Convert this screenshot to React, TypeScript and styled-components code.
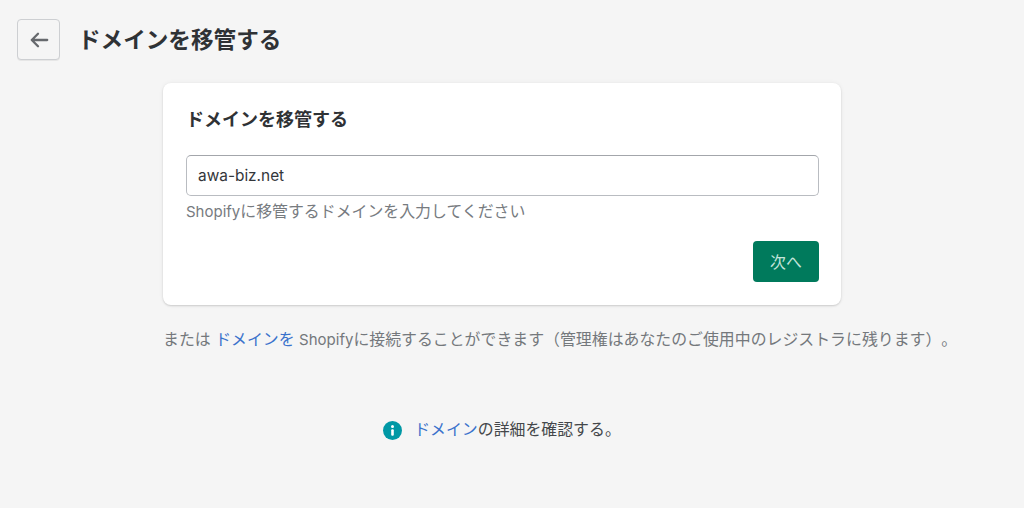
import React from 'react';
import styled, { createGlobalStyle } from 'styled-components';

const GlobalStyle = createGlobalStyle`
  html,
  body {
    margin: 0;
    padding: 0;
    height: 100%;
    background: #f5f5f5;
    font-family: 'Inter', 'Noto Sans CJK JP', sans-serif;
    text-spacing-trim: space-all;
  }
`;

const Page = styled.div`
  width: 1024px;
  height: 508px;
  overflow: hidden;
  box-sizing: border-box;
  padding: 19px 0 0 17px;
`;

const Header = styled.header`
  display: flex;
  align-items: center;
  gap: 18px;
`;

const BackButton = styled.button`
  width: 43px;
  height: 41px;
  box-sizing: border-box;
  display: flex;
  align-items: center;
  justify-content: center;
  padding: 0;
  background: #f5f5f5;
  border: 1px solid #cdcfd2;
  border-radius: 4px;
  box-shadow: 0 1px 0 rgba(0, 0, 0, 0.06);
  color: #66696d;
`;

const PageTitle = styled.h1`
  margin: 0;
  font-size: 22.6px;
  line-height: 41px;
  font-weight: 600;
  color: #2f3235;
`;

const Content = styled.main`
  width: 678px;
  margin: 23px 0 0 146px;
`;

const Card = styled.section`
  height: 222px;
  box-sizing: border-box;
  padding: 24px 22px 0 23px;
  background: #fff;
  border-radius: 8px;
  box-shadow: 0 0 5px rgba(23, 24, 24, 0.05), 0 1px 2px rgba(0, 0, 0, 0.15);
`;

const CardTitle = styled.h2`
  margin: 0;
  font-size: 18px;
  line-height: 26px;
  font-weight: 600;
  color: #2f3235;
`;

const DomainInput = styled.input`
  display: block;
  width: 100%;
  height: 41px;
  box-sizing: border-box;
  margin-top: 22px;
  padding: 0 11px;
  background: #fff;
  border: 1px solid #b9bcc1;
  border-top-color: #a3a6ab;
  border-radius: 5px;
  font-family: inherit;
  font-size: 15.4px;
  color: #33363a;
  outline: none;
`;

const HelpText = styled.p`
  margin: 4px 0 0;
  font-size: 15.9px;
  line-height: 24px;
  color: #777b7f;
`;

const Latin = styled.span`
  font-size: 15px;
`;

const CardActions = styled.div`
  display: flex;
  justify-content: flex-end;
  margin-top: 17px;
`;

const PrimaryButton = styled.button`
  width: 66px;
  height: 41px;
  padding: 0;
  background: #007a5c;
  border: none;
  border-radius: 4px;
  font-family: inherit;
  font-size: 15.9px;
  color: #c4e4da;
`;

const AltText = styled.p`
  margin: 23px 0 0;
  white-space: nowrap;
  font-size: 15.9px;
  line-height: 24px;
  color: #74787c;
`;

const TextLink = styled.a`
  color: #3a72cc;
  text-decoration: none;
`;

const InfoRow = styled.div`
  display: flex;
  align-items: center;
  justify-content: center;
  gap: 12px;
  margin-top: 66px;
  font-size: 15.9px;
  line-height: 24px;
  color: #44474a;
`;

const App = () => {
  return (
    <>
      <GlobalStyle />
      <Page>
        <Header>
          <BackButton aria-label="戻る">
            <svg width="20" height="20" viewBox="0 0 20 20" fill="none">
              <path
                d="M18.2 10H2.8M9 3.8 2.8 10 9 16.2"
                stroke="currentColor"
                strokeWidth="2.3"
                strokeLinecap="round"
                strokeLinejoin="round"
              />
            </svg>
          </BackButton>
          <PageTitle>ドメインを移管する</PageTitle>
        </Header>
        <Content>
          <Card>
            <CardTitle>ドメインを移管する</CardTitle>
            <DomainInput defaultValue="awa-biz.net" />
            <HelpText>
              <Latin>Shopify</Latin>に移管するドメインを入力してください
            </HelpText>
            <CardActions>
              <PrimaryButton>次へ</PrimaryButton>
            </CardActions>
          </Card>
          <AltText>
            または <TextLink href="#">ドメインを</TextLink> <Latin>Shopify</Latin>に接続することができます（管理権はあなたのご使用中のレジストラに残ります）。
          </AltText>
          <InfoRow>
            <svg width="19" height="19" viewBox="0 0 19 19">
              <circle cx="9.5" cy="9.5" r="9.5" fill="#0098a5" />
              <circle cx="9.5" cy="5.4" r="1.5" fill="#fff" />
              <rect x="8.2" y="8.2" width="2.6" height="6.6" rx="1" fill="#fff" />
            </svg>
            <span>
              <TextLink href="#">ドメイン</TextLink>の詳細を確認する。
            </span>
          </InfoRow>
        </Content>
      </Page>
    </>
  );
};

export default App;
